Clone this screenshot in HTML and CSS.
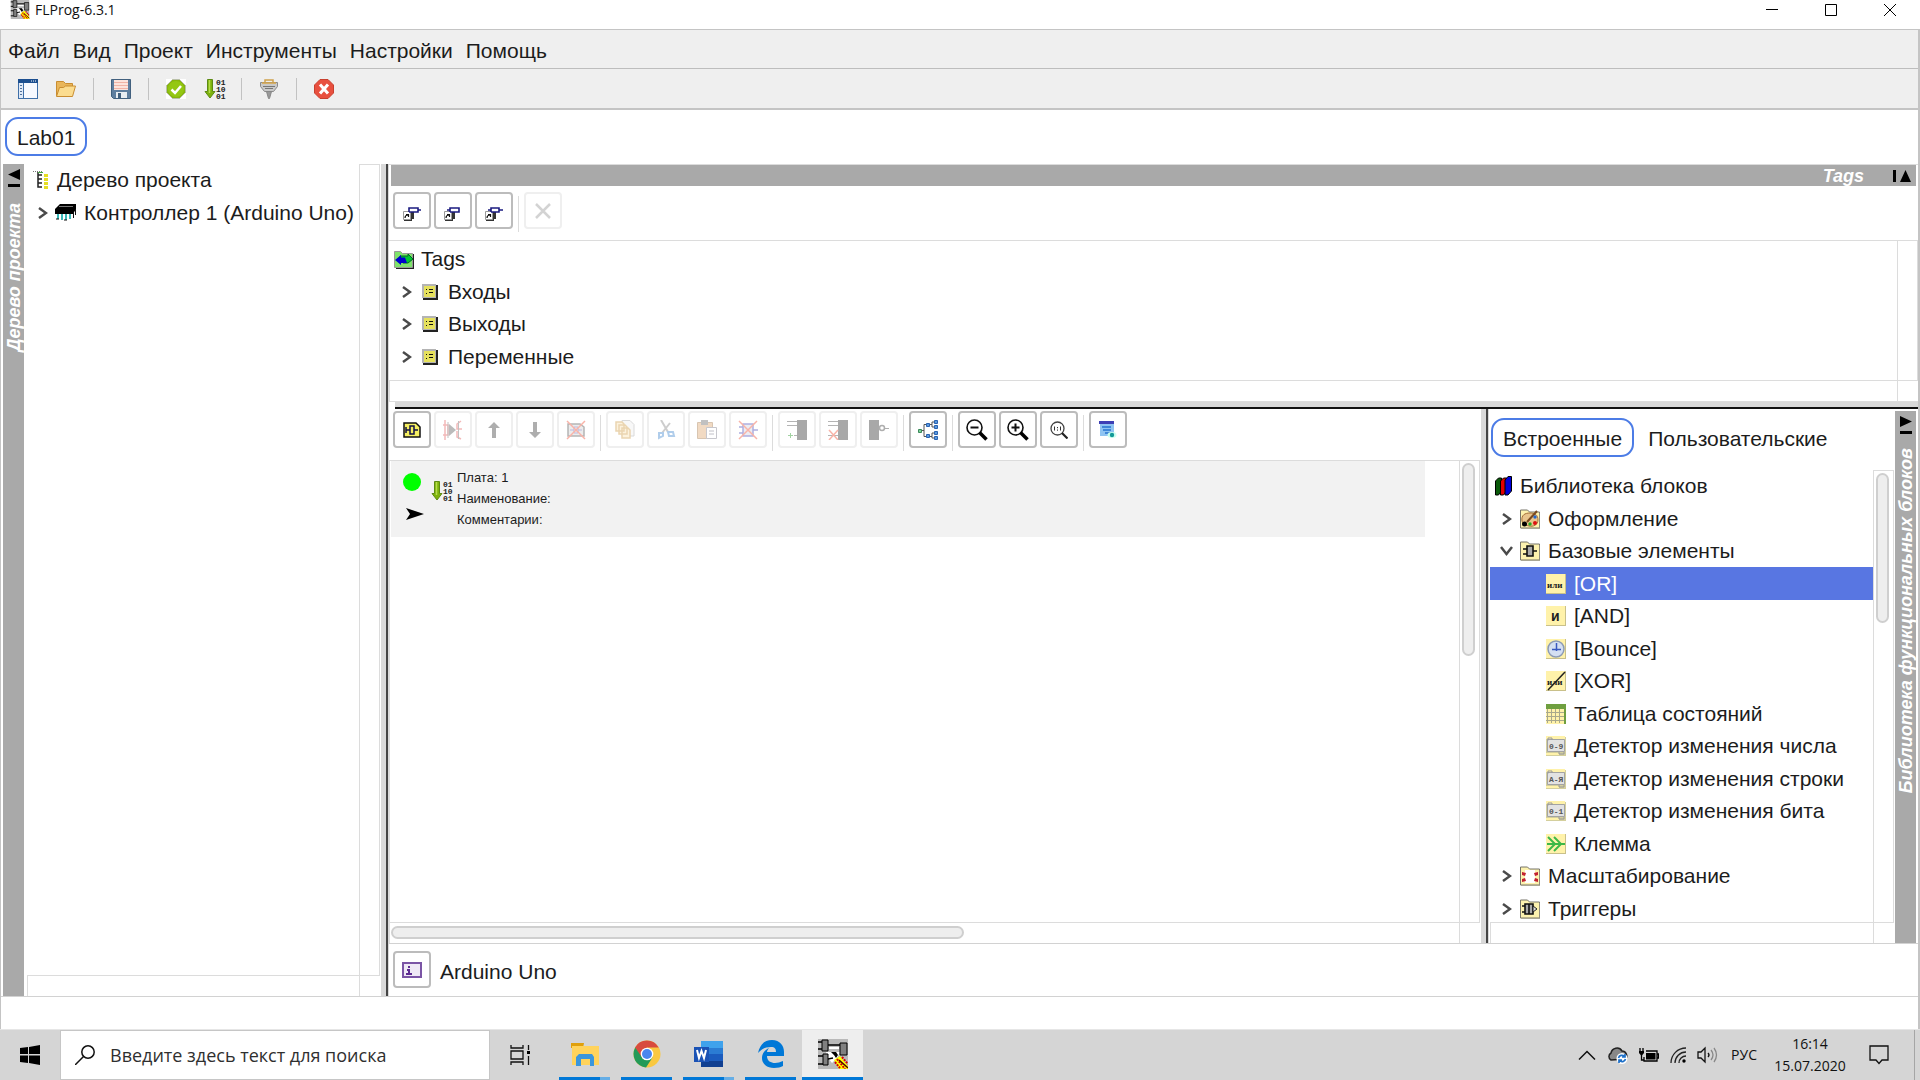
FILE: index.html
```html
<!DOCTYPE html>
<html lang="ru">
<head>
<meta charset="utf-8">
<title>FLProg-6.3.1</title>
<link rel="stylesheet" href="styles.css">
</head>
<body>
<svg class="defs" aria-hidden="true">
  <symbol id="i-app" viewBox="0 0 30 30">
    <path fill="#b9b9b9" d="M0 0h30v30H0z"/>
    <path fill="#fff" d="M11 8h10v2H11zM8 13h14l-3 6-5 5-4-5z"/>
    <path fill="#808080" stroke="#000" stroke-width="1" d="M4 1h6v11H4zM22 4h7v12h-7zM5 15h5v11H5z"/>
    <path fill="none" stroke="#000" stroke-width="1.500" d="M0 3h4M0 10h4M10 6h12M0 17h5M0 25h5M10 20l5-1"/>
    <path fill="#000" d="M13 13h5l2 3-2 3-2-3z"/>
    <path fill="#ff0" d="M16 21l6-4 8 10v3h-9z"/>
    <path fill="none" stroke="#d40000" stroke-width="2" stroke-dasharray="2 1" d="M19 20l8 10M24 18l6 7M17 23l5 6"/>
    <path fill="none" stroke="#400" stroke-width="1.400" d="M21 21l9 8"/>
  </symbol>
  <symbol id="i-down" viewBox="0 0 22 20">
    <path fill="#7db20b" stroke="#5d8a14" d="M3.500.5h5v12h2.500L6 19 1 12.500h2.500z"/>
    <path stroke="#b6dc4c" stroke-width="1.500" d="M5.500 1v13"/>
    <g font-family="Liberation Mono,monospace" font-weight="700" font-size="8" fill="#222"><text x="12" y="6">01</text><text x="12" y="13">10</text><text x="12" y="20">01</text></g>
  </symbol>
  <symbol id="i-chev" viewBox="0 0 10 14"><path fill="none" stroke="#4a4a4a" stroke-width="2.500" d="M1 2l7 5-7 5"/></symbol>
  <symbol id="i-list" viewBox="0 0 16 16">
    <path fill="#222" d="M1 1h15v15H1z"/><path fill="#b4b4b4" d="M0 0h14v14H0z"/><path fill="#e6e15c" d="M2 2h11v11H2z"/>
    <path stroke="#111" d="M4 5.500h1M4 9.500h1M7 5.500h4M7 8.500h4"/>
  </symbol>
  <symbol id="i-folder" viewBox="0 0 20 20">
    <path fill="#fdf2ae" stroke="#77756a" d="M.5 19V1h7l2 2h10v16z"/><path fill="none" stroke="#aaa794" d="M1 19.500h19V4"/>
  </symbol>
  <symbol id="i-card" viewBox="0 0 20 20"><path fill="#c9c08a" d="M0 0h20v20H0z"/><path fill="#fff2aa" d="M0 0h19v19H0z"/></symbol>
  <symbol id="i-case" viewBox="0 0 20 20">
    <path fill="#d4cf9d" d="M0 1h20v19H0z"/><path fill="#fff2aa" d="M0 0h19v3H0zM0 17h13v2H0z"/>
    <path fill="#e2e2e2" stroke="#a3a3a3" d="M1.500 3.500h17v12h-17z"/><path fill="none" stroke="#999" d="M2 4.500V2h4v2M13 16v2h5v-2"/>
  </symbol>
  <symbol id="i-page" viewBox="0 0 18 16">
    <path fill="#f5ef62" stroke="#111" stroke-width="1.500" d="M1 15V1h12l4 4v10z"/><path fill="none" stroke="#114" stroke-width="1.500" d="M3 8h4M11 8h4M7 4h4v8H7zM3 5v6"/>
  </symbol>
  <symbol id="i-tag" viewBox="0 0 18 16">
    <path fill="#333" d="M1 7h8v8H1zM8 5h3v8H8z"/><path fill="#fff" stroke="#999" d="M.5 5.500h7v8h-7z"/><path fill="none" stroke="#111" stroke-width="1.200" d="M2 12c0-2 1-3 3-3M3 8.500h2.500V11"/>
  </symbol>
  <symbol id="i-lens" viewBox="0 0 22 22">
    <circle cx="8.500" cy="8.500" r="7.500" fill="#fff" stroke="#111" stroke-width="1.600"/><path stroke="#000" stroke-width="3.500" d="M13.500 13.500l7 7"/>
  </symbol>
</svg>

<header class="titlebar">
  <svg class="title-icon" viewBox="0 0 30 30"><use href="#i-app"/></svg>
  <h1 class="title">FLProg-6.3.1</h1>
  <div class="win-buttons">
    <button class="win-btn" aria-label="Свернуть"><svg width="12" height="12"><path stroke="#000" d="M0 5.500h12"/></svg></button>
    <button class="win-btn" aria-label="Развернуть"><svg width="12" height="12"><path fill="none" stroke="#000" d="M.5.5h11v11H.5z"/></svg></button>
    <button class="win-btn" aria-label="Закрыть"><svg width="12" height="12"><path stroke="#000" d="M0 0l12 12M12 0L0 12"/></svg></button>
  </div>
</header>

<div class="window">
  <nav class="menubar">
    <button class="menu">Файл</button><button class="menu">Вид</button><button class="menu">Проект</button><button class="menu">Инструменты</button><button class="menu">Настройки</button><button class="menu">Помощь</button>
  </nav>

  <div class="toolbar">
    <button class="tool" aria-label="Новый"><svg width="20" height="20"><path fill="#3f6fa8" d="M0 0h20v20H0z"/><path fill="#1c4f90" d="M0 0h20v4H0z"/><path fill="#dfe9f7" d="M1 4h4v15H1z"/><path fill="#f7f9ff" d="M6 4h13v15H6z"/><path stroke="#4f6f9a" d="M2 6.500h2M2 9.500h2M2 12.500h2M2 15.500h2"/><path stroke="#fff" d="M13 2h1M15 2h1M17 2h1"/></svg></button>
    <button class="tool" aria-label="Открыть"><svg width="20" height="20"><path fill="#e9b65a" stroke="#c98d31" d="M.5 17V2.500h7l2 2h7V8"/><path fill="#fbdc8f" stroke="#c98d31" d="M.5 17.500l3-9h4l2-1.500h10l-3 10.500z"/></svg></button>
    <span class="tool-sep"></span>
    <button class="tool" aria-label="Сохранить"><svg width="20" height="20"><path fill="#5f7f9f" stroke="#41607e" d="M.5.5h19v19h-17l-2-2z"/><path fill="#fbe3dc" d="M3 1h14v10H3z"/><path stroke="#f0b3a6" d="M3 3.500h14M3 6.500h14M3 9.500h14"/><path fill="#e9eef2" d="M5 13h11v6H5z"/><path fill="#41607e" d="M7 14h3v5H7z"/></svg></button>
    <span class="tool-sep"></span>
    <button class="tool" aria-label="Проверить"><svg width="20" height="20"><path fill="#fff" d="M0 0h20v20H0z"/><path fill="#86b50d" stroke="#b9bfa8" d="M6.500.5h7l6 6v7l-6 6h-7l-6-6v-7z"/><circle cx="10" cy="10" r="8" fill="#94c713"/><path fill="none" stroke="#fff" stroke-width="2.500" d="M5.500 10.500l3.500 3.500 6-7"/></svg></button>
    <button class="tool" aria-label="Компилировать"><svg width="22" height="20"><use href="#i-down"/></svg></button>
    <span class="tool-sep"></span>
    <button class="tool" aria-label="Порт"><svg width="20" height="20"><path fill="none" stroke="#d0a24e" stroke-width="1.500" d="M6 4V1h8v3"/><path fill="#c9c9c9" stroke="#8b8b8b" d="M1.500 3.500h17v4l-4 5h-9l-4-5z"/><path stroke="#d9a647" stroke-width="1.500" d="M3 4h14"/><path stroke="#777" d="M4 7.500h12M6 9.500h8"/><path fill="#9a9a9a" stroke="#888" d="M7.500 12.500h5l-2 7h-1z"/></svg></button>
    <span class="tool-sep"></span>
    <button class="tool" aria-label="Закрыть проект"><svg width="20" height="20"><path fill="#e8503f" stroke="#c8402f" d="M6 .5h8L19.500 6v8L14 19.500H6L.5 14V6z"/><path stroke="#fff" stroke-width="3" d="M6 5.500l8 9M14 5.500l-8 9"/></svg></button>
  </div>

  <div class="project-tabs"><button class="tab tab-active">Lab01</button></div>

  <main class="workspace">
    <aside class="rail">
      <svg width="12" height="18"><path d="M0 5.500L12 0v11zM0 15h12v3H0z"/></svg>
      <span class="rail-text">Дерево проекта</span>
    </aside>

    <section class="pane project-pane">
      <div class="pane-body">
        <ul class="tree tree-project">
          <li class="node root"><svg width="16" height="20"><path stroke="#777" d="M0 1.500h10" stroke-dasharray="1 1"/><path fill="none" stroke="#222" stroke-width="1.500" d="M5 2v15h4M5 5h4M5 9h4M5 13h4"/><path stroke="#4a4" d="M5 2.500h5"/><path stroke="#e5de23" stroke-width="4" stroke-dasharray="3 1" d="M13 4v15"/></svg>Дерево проекта</li>
          <li class="node"><svg class="chev" width="10" height="14"><use href="#i-chev"/></svg><svg width="22" height="17"><path fill="#000" d="M5 0h16v5l-3 5H0V5z"/><path stroke="#777" d="M4 2.500h14"/><path stroke="#39b8b8" stroke-width="2" d="M3 10v5M7 10v6M11 10v6M15 10v5"/><path stroke="#111" d="M18.500 8v6M20.500 5v6M1 15h3M9 16h3"/></svg>Контроллер 1 (Arduino Uno)</li>
        </ul>
      </div>
      <div class="vtrack"></div><div class="htrack"></div><div class="corner"></div>
    </section>

    <div class="split-v"></div>

    <div class="right">
      <section class="tags">
        <header class="tags-bar"><span class="bar-text">Tags</span><svg width="18" height="12"><path d="M0 0h3v12H0zM7 12l5.500-12L18 12z"/></svg></header>
        <div class="btn-row">
          <button class="btn btn-low" aria-label="Добавить вход"><svg width="18" height="16"><use href="#i-tag"/><path fill="#fff" stroke="#1b1b80" stroke-width="1.600" d="M6 6V2h9v4H6M15 4h3"/></svg></button>
          <button class="btn btn-low" aria-label="Добавить выход"><svg width="18" height="16"><use href="#i-tag"/><path fill="#fff" stroke="#1b1b80" stroke-width="1.600" d="M6 6V2h9v4H6M3 4h3"/></svg></button>
          <button class="btn btn-low" aria-label="Добавить переменную"><svg width="18" height="16"><use href="#i-tag"/><path fill="#fff" stroke="#1b1b80" stroke-width="1.600" d="M6 6V2h8v4H6M3 4h3M14 4h4"/></svg></button>
          <span class="btn-sep"></span>
          <button class="btn" disabled aria-label="Удалить"><svg width="16" height="16"><path stroke="#888" stroke-width="2.500" d="M1 1l14 14M15 1L1 15"/></svg></button>
        </div>
        <div class="pane tags-pane">
          <div class="pane-body">
            <ul class="tree tree-tags">
              <li class="node root"><svg width="20" height="19"><path fill="#222" d="M2 4h18v15H2z"/><path fill="#7fe36b" stroke="#999" d="M.5 17.500v-16h6l2 2h10v14z"/><path fill="#00c832" stroke="#062" d="M6 6h8V4l5 5-5 4H9z"/><path fill="#00c" d="M1 10l6-5v2.500h4L13 13H7v2z"/></svg>Tags</li>
              <li class="node"><svg class="chev" width="10" height="14"><use href="#i-chev"/></svg><svg width="16" height="16"><use href="#i-list"/></svg>Входы</li>
              <li class="node"><svg class="chev" width="10" height="14"><use href="#i-chev"/></svg><svg width="16" height="16"><use href="#i-list"/></svg>Выходы</li>
              <li class="node"><svg class="chev" width="10" height="14"><use href="#i-chev"/></svg><svg width="16" height="16"><use href="#i-list"/></svg>Переменные</li>
            </ul>
          </div>
          <div class="vtrack"></div><div class="htrack"></div><div class="corner"></div>
        </div>
      </section>

      <div class="split-h"></div>

      <div class="lower">
        <section class="editor">
          <div class="btn-row">
            <button class="btn" aria-label="Добавить плату"><svg width="18" height="16"><use href="#i-page"/></svg></button>
            <button class="btn" disabled aria-label="Вставить плату"><svg width="20" height="20"><path fill="none" stroke="#e04040" stroke-width="1.500" d="M2 0v20M0 5h5v10H0M18 1l-4 3v5h5M14 11v6l4 2"/><path fill="#444" d="M6 4l7 6-7 6z"/><path fill="none" stroke="#555" d="M5 2v16M15.500 1v18"/></svg></button>
            <button class="btn" disabled aria-label="Вверх"><svg width="12" height="16"><path fill="#222" d="M6 0l6 6H8v10H4V6H0z"/></svg></button>
            <button class="btn" disabled aria-label="Вниз"><svg width="12" height="16"><path fill="#222" d="M6 16L0 10h4V0h4v10h4z"/></svg></button>
            <button class="btn" disabled aria-label="Удалить плату"><svg width="20" height="20"><path fill="#ccc" stroke="#333" stroke-width="1.500" d="M2 16V4h12l4 3v9z"/><path fill="none" stroke="#44a" d="M4 10h4V7h4v6H8v-3M12 10h4"/><path stroke="#f03010" stroke-width="1.500" d="M1 1l18 18M19 1L1 19"/></svg></button>
            <span class="btn-sep"></span>
            <button class="btn" disabled aria-label="Копировать"><svg width="20" height="20"><path fill="#eee" stroke="#999" d="M7 .5h8l4 4V16H7z"/><path fill="#f7dda4" stroke="#c78c28" stroke-width="1.500" d="M1 2h6l2 2v7H1zM4 5h6l2 2v7H4zM7 8h6l2 2v8H7z"/></svg></button>
            <button class="btn" disabled aria-label="Вырезать"><svg width="20" height="20"><path stroke="#777" stroke-width="2" d="M5 0l7 12M14 3L6 13"/><path fill="none" stroke="#2878c8" stroke-width="2" d="M3 13h4v3l-4 2zM12 12h5l1 4h-5z"/></svg></button>
            <button class="btn" disabled aria-label="Вставить"><svg width="20" height="20"><path fill="#d99a5c" stroke="#96602b" d="M.5 2.500h15v16H.5z"/><path fill="#555" d="M4 0h7v5H4z"/><path fill="#fff" stroke="#667" d="M9.500 7.500h10v11h-10z"/><path stroke="#556" d="M12 11h5M12 14h5"/></svg></button>
            <button class="btn" disabled aria-label="Удалить блок"><svg width="20" height="20"><path fill="#ccd" stroke="#22a" stroke-width="1.500" d="M5 4h10v12H5zM1 7h4M1 13h4M15 10h5"/><path stroke="#f03010" stroke-width="1.500" d="M1 1l18 18M19 1L1 19"/></svg></button>
            <span class="btn-sep"></span>
            <button class="btn" disabled aria-label="Добавить вход блока"><svg width="20" height="20"><path fill="#111" d="M10 0h10v20H10z"/><path stroke="#333" d="M0 1.500h10M0 5.500h10M7 15.500h3"/><path stroke="#080" d="M1 15.500h5M3.500 13v5"/></svg></button>
            <button class="btn" disabled aria-label="Удалить вход блока"><svg width="20" height="20"><path fill="#111" d="M10 0h10v20H10z"/><path stroke="#333" d="M0 1.500h10M0 5.500h10M0 15.500h10"/><path stroke="#f03010" stroke-width="1.500" d="M1 10l9 10M10 10L1 20"/></svg></button>
            <button class="btn" disabled aria-label="Инвертировать"><svg width="20" height="20"><path fill="#111" d="M0 0h10v20H0z"/><circle cx="13" cy="8" r="2.500" fill="#fff" stroke="#222" stroke-width="1.500"/><path stroke="#222" d="M16 8.500h4"/></svg></button>
            <span class="btn-sep"></span>
            <button class="btn" aria-label="Структура"><svg width="20" height="20"><path fill="none" stroke="#555" d="M3 10.500h3M9 4.500H6v12h3M11 4.500h3V2h2M14 4.500V7h2M11 16.500h3V13h2M14 16.500V18h2"/><path fill="#7fcf9a" stroke="#3a8a5a" d="M.5 9.500h3v3h-3z"/><path fill="#5a9be0" stroke="#2a62b0" d="M8.500 3.500h3v3h-3zM8.500 14.500h3v3h-3zM16.500.5h3v3h-3zM16.500 5.500h3v3h-3zM16.500 11.500h3v3h-3zM16.500 16.500h3v3h-3z"/></svg></button>
            <span class="btn-sep"></span>
            <button class="btn" aria-label="Уменьшить"><svg width="22" height="22"><use href="#i-lens"/><path stroke="#111" stroke-width="2" d="M4.500 8.500h8"/></svg></button>
            <button class="btn" aria-label="Увеличить"><svg width="22" height="22"><use href="#i-lens"/><path stroke="#111" stroke-width="2" d="M4.500 8.500h8M8.500 4.500v8"/></svg></button>
            <button class="btn" aria-label="Масштаб 1:1"><svg width="18" height="18"><circle cx="7.500" cy="7.500" r="6.500" fill="#fff" stroke="#444" stroke-width="1.300"/><path stroke="#222" stroke-width="2.200" d="M12 12l5.500 5.500"/><path stroke="#333" d="M4.500 5.500v4M10.500 5.500v4M7.500 6v1.200M7.500 8.500v1.200"/></svg></button>
            <span class="btn-sep"></span>
            <button class="btn" aria-label="Просмотр"><svg width="18" height="18"><path fill="#8fc4f2" d="M1 3h14v12H1z"/><path fill="#3d3fb5" d="M0 0h15v3H0z"/><path stroke="#3f87d8" stroke-width="2" d="M3 6h9M4 9h8M6 12h6"/><ellipse cx="13" cy="14" rx="4.500" ry="3" fill="#cfe"/><circle cx="13" cy="14" r="2.200" fill="#129a98"/></svg></button>
          </div>
          <div class="pane editor-pane">
            <div class="pane-body">
              <article class="board">
                <div class="board-marks">
                  <svg width="18" height="18"><circle cx="9" cy="9" r="9" fill="#0f0"/></svg>
                  <svg width="18" height="12"><path d="M0 0l18 6-18 6 4-6z"/></svg>
                </div>
                <svg class="board-icon" width="22" height="20"><use href="#i-down"/></svg>
                <div class="board-text"><p>Плата: 1</p><p>Наименование:</p><p>Комментарии:</p></div>
              </article>
            </div>
            <div class="vtrack"><div class="thumb thumb-v-editor"></div></div>
            <div class="htrack"><div class="thumb thumb-h-editor"></div></div>
            <div class="corner"></div>
          </div>
        </section>

        <div class="split-v"></div>

        <section class="library">
          <div class="lib-tabs"><button class="tab tab-active">Встроенные</button><button class="tab">Пользовательские</button></div>
          <div class="pane lib-pane">
            <div class="pane-body">
              <ul class="tree tree-lib">
                <li class="node root"><svg width="17" height="20"><path fill="#0a5a0a" stroke="#000" d="M.5 5l3-3h3v13l-3 4h-3z"/><path fill="#e00000" stroke="#000" d="M5.500 5l3-3h3v13l-3 4h-3z"/><path fill="#0000d8" stroke="#000" d="M10 4l3-3.500h3.500V15L13 19h-3z"/></svg>Библиотека блоков</li>
                <li class="node"><svg class="chev" width="10" height="14"><use href="#i-chev"/></svg><svg width="20" height="20"><use href="#i-folder"/><path fill="#e8c48c" stroke="#a5713a" d="M2 12C1 6 5 4 10 4s8 2 8 7-5 7-9 6-6-1-7-5z"/><path stroke="#7a4a20" stroke-width="2" d="M17 2L7 13"/><circle cx="4.500" cy="15" r="2.500"/><circle cx="15" cy="8" r="1.700" fill="#26c"/><circle cx="10" cy="15" r="1.700" fill="#2a2"/><circle cx="15" cy="14" r="2" fill="#d11"/></svg>Оформление</li>
                <li class="node"><svg class="chev" width="10" height="12"><path fill="none" stroke="#4a4a4a" stroke-width="2.500" d="M-1 2l5.500 7L10 2"/></svg><svg width="20" height="20"><use href="#i-folder"/><path fill="#aaa" stroke="#111" stroke-width="1.600" d="M7 5h6v10H7zM3 8h4M3 13h4M13 10h4"/></svg>Базовые элементы</li>
                <li class="node leaf selected"><svg width="20" height="20"><use href="#i-card"/><text x="1" y="14" font-family="Liberation Serif,serif" font-weight="700" font-size="9" fill="#222">или</text></svg>[OR]</li>
                <li class="node leaf"><svg width="20" height="20"><use href="#i-card"/><text x="5" y="15" font-family="Liberation Sans,sans-serif" font-weight="700" font-size="14" fill="#222">и</text></svg>[AND]</li>
                <li class="node leaf"><svg width="20" height="20"><use href="#i-card"/><circle cx="10" cy="10" r="8" fill="#d4dff2" stroke="#8b9ab5" stroke-width="1.500"/><path fill="none" stroke="#3858c0" stroke-width="1.500" d="M10.500 4v8M6 10.500h9"/></svg>[Bounce]</li>
                <li class="node leaf"><svg width="20" height="20"><use href="#i-card"/><text x="1" y="14" font-family="Liberation Serif,serif" font-weight="700" font-size="9" fill="#222">или</text><path stroke="#222" stroke-width="1.500" d="M2 19L19 1"/></svg>[XOR]</li>
                <li class="node leaf"><svg width="20" height="20"><path fill="#fff2aa" d="M0 0h20v20H0z"/><path fill="#6f9f40" d="M0 0h20v20h-2V5H0z"/><path stroke="#a9a98c" d="M1.500 5v14M5.500 5v14M9.500 5v14M13.500 5v14M0 8.500h18M0 12.500h18M0 16.500h18"/></svg>Таблица состояний</li>
                <li class="node leaf"><svg width="20" height="20"><use href="#i-case"/><text x="3" y="13" font-family="Liberation Mono,monospace" font-weight="700" font-size="8" fill="#555">0-9</text></svg>Детектор изменения числа</li>
                <li class="node leaf"><svg width="20" height="20"><use href="#i-case"/><text x="3" y="13" font-family="Liberation Mono,monospace" font-weight="700" font-size="8" fill="#555">А-Я</text></svg>Детектор изменения строки</li>
                <li class="node leaf"><svg width="20" height="20"><use href="#i-case"/><text x="3" y="13" font-family="Liberation Mono,monospace" font-weight="700" font-size="8" fill="#555">0-1</text></svg>Детектор изменения бита</li>
                <li class="node leaf"><svg width="20" height="20"><use href="#i-card"/><path fill="none" stroke="#3db848" stroke-width="2" d="M2 3l7 7-7 7M8 3l7 7-7 7M1 10h18"/></svg>Клемма</li>
                <li class="node"><svg class="chev" width="10" height="14"><use href="#i-chev"/></svg><svg width="20" height="20"><use href="#i-folder"/><path fill="#fff" d="M5 4h10v13H5z"/><path fill="#c22030" d="M2 6l4 1-1 3-3-1zM2 16l4-1-1-3-3 1zM18 6l-4 1 1 3 3-1zM18 16l-4-1 1-3 3 1z"/></svg>Масштабирование</li>
                <li class="node"><svg class="chev" width="10" height="14"><use href="#i-chev"/></svg><svg width="20" height="20"><use href="#i-folder"/><path fill="#aaa" stroke="#111" stroke-width="1.600" d="M5 5h8v10H5zM2 7h3M2 13h3M9 5v10"/><path fill="#ddd" stroke="#222" d="M13 7l4 3-4 3z"/></svg>Триггеры</li>
              </ul>
            </div>
            <div class="vtrack"><div class="thumb thumb-v-lib"></div></div><div class="htrack"></div><div class="corner"></div>
          </div>
        </section>

        <aside class="rail rail-right">
          <svg width="12" height="18"><path d="M12 5.500L0 0v11zM0 15h12v3H0z"/></svg>
          <span class="rail-text">Библиотека функциональных блоков</span>
        </aside>
      </div>

      <footer class="board-footer">
        <button class="btn" aria-label="Информация"><svg width="20" height="16"><path fill="#efe9f5" stroke="#7b55a5" stroke-width="2" d="M1 1h18v14H1z"/><path fill="#5d2c91" d="M6 4h2v2H6zM5 7h3v4h2v2H4v-2h2V9H5z"/></svg></button>
        <span>Arduino Uno</span>
      </footer>
    </div>
  </main>
</div>

<footer class="taskbar">
  <button class="start" aria-label="Пуск"><svg width="20" height="20"><path d="M0 3l8-1v7H0zM9 2l11-2v9H9zM0 10.500h8v7.500l-8-1zM9 10.500h11V20L9 18z"/></svg></button>
  <label class="search"><svg width="20" height="20"><circle cx="13" cy="7" r="6.200" fill="none" stroke="#111" stroke-width="1.500"/><path stroke="#111" stroke-width="1.500" d="M8.500 11.500L0 20"/></svg><input class="search-input" type="text" placeholder="Введите здесь текст для поиска" aria-label="Поиск"></label>
  <button class="taskview" aria-label="Представление задач"><svg width="20" height="20"><path fill="none" stroke="#111" stroke-width="1.300" d="M1 0v3h12V0M1 6h12v8H1zM1 20v-3h12v3M18.500 0v5M18.500 11v9"/><path d="M17 6h3v3h-3z"/></svg></button>
  <div class="apps">
    <button class="app app-multi" aria-label="Проводник"><svg width="28" height="24"><path fill="#e0a00c" d="M0 1h13l-1 5H0z"/><path fill="#ffd35c" d="M1 4h27v19H1z"/><path fill="#3b96dc" d="M5 24V15l3-3h13l2 3v9h-4v-7H10v7z"/></svg></button>
    <button class="app" aria-label="Chrome"><svg width="28" height="28"><circle cx="14" cy="14" r="13.500" fill="#f9c840"/><path fill="#d84b3e" d="M2 7.500A13.500 13.500 0 0 1 25.700 7.500H14L8 18z"/><path fill="#239a58" d="M2.200 7.500A13.500 13.500 0 0 0 13 27.500L19.500 17.500 9 17.500z"/><circle cx="14" cy="14" r="6.300" fill="#fff"/><circle cx="14" cy="14" r="5" fill="#4a86ee"/></svg></button>
    <button class="app app-multi" aria-label="Word"><svg width="30" height="28"><path fill="#3fa2ec" d="M7 1h22v7H7z"/><path fill="#2b7cd3" d="M7 8h22v6H7z"/><path fill="#1b5cbe" d="M7 14h22v7H7z"/><path fill="#103f91" d="M7 21h22v6H7z"/><path fill="#1a52b5" d="M0 7h15v15H0z"/><path fill="none" stroke="#fff" stroke-width="2" d="M3 10l2 8 2.500-7 2.500 7 2-8"/></svg></button>
    <button class="app" aria-label="Edge"><svg width="26" height="28"><path fill="#0078d7" d="M0 13C2 4 7 0 14 0c8 0 12 6 12 12v4H9c0 5 4 7 8 7 3 0 5-1 8-2v5c-2 1-5 2-9 2C9 28 4 24 4 18c0-5 3-8 7-10-1 1-2 3-2 4h9c0-3-1-5-5-5C8 7 3 9 0 13z"/></svg></button>
    <button class="app app-current" aria-label="FLProg"><svg width="30" height="30"><use href="#i-app"/></svg></button>
  </div>
  <div class="tray">
    <svg width="18" height="10"><path fill="none" stroke="#111" stroke-width="1.500" d="M1 9.500l8-8 8 8"/></svg>
    <svg width="21" height="18"><path fill="#888" stroke="#222" stroke-width="1.500" d="M4 14a4 4 0 0 1 0-7c1-5 8-7 11-2 4 0 6 5 4 8z"/><circle cx="15" cy="12.500" r="5.500" fill="#fff"/><path fill="none" stroke="#1e70c8" stroke-width="1.700" d="M11.500 12a3.500 3.500 0 0 1 6-1.500M18.500 13a3.500 3.500 0 0 1-6 1.500M18 8v3h-3M12 17v-3h3"/></svg>
    <svg width="20" height="14"><path fill="none" stroke="#000" stroke-width="1.300" d="M7 3h11v10H5V9M18 6h1.500v4H18M1 0v3M4 0v3M2.500 7v5H5"/><path d="M0 3h5v2L2.500 8 0 5zM7 5h9.500v6.500H7z"/></svg>
    <svg width="16" height="16"><path fill="none" stroke="#222" stroke-width="1.300" d="M1 16A15 15 0 0 1 16 1M5 16A11 11 0 0 1 16 5M9 16a7 7 0 0 1 7-7"/><circle cx="14" cy="14" r="1.700"/></svg>
    <svg width="21" height="18"><path fill="none" stroke="#111" stroke-width="1.300" d="M1 6h3l4-4v14l-4-4H1z"/><path fill="none" stroke="#111" stroke-width="1.300" d="M11 7q2 2 0 4"/><path fill="none" stroke="#888" stroke-width="1.300" d="M14 4q4 5 0 10M17 2q5 7 0 14"/></svg>
    <span class="lang">РУС</span>
    <time class="clock"><span>16:14</span><span>15.07.2020</span></time>
    <svg width="20" height="20"><path fill="none" stroke="#111" stroke-width="1.300" d="M1 1h18v14h-6l-3 3.500L7 15H1z"/></svg>
  </div>
  <div class="show-desktop"></div>
</footer>
</body>
</html>
```
FILE: styles.css
```css
* { box-sizing: border-box; }

body {
  margin: 0;
  height: 100vh;
  display: flex;
  flex-direction: column;
  background: #fff;
  color: #1c1c1c;
  font: 21px/32px "Liberation Sans", Arial, sans-serif;
}

button {
  margin: 0;
  padding: 0;
  border: 0;
  background: none;
  color: inherit;
  font: inherit;
}

svg { display: block; flex: none; }
.defs { display: none; }
ul, p, h1 { margin: 0; padding: 0; list-style: none; }

/* Title bar */
.titlebar { display: flex; flex: none; height: 29px; padding-left: 10px; align-items: flex-start; }
.title-icon { width: 20px; height: 19px; }
.title { flex: 1; margin-left: 5px; font: 14px/20px "Open Sans", sans-serif; color: #111; }
.win-buttons { display: flex; padding-right: 1px; }
.win-btn { width: 59px; height: 20px; display: flex; justify-content: center; align-items: center; }

/* Window frame */
.window {
  flex: 1;
  min-height: 0;
  display: flex;
  flex-direction: column;
  border: solid #c4c4c4;
  border-width: 1px 2px 0 1px;
  padding-bottom: 32px;
}

.menubar { display: flex; flex: none; gap: 13px; height: 39px; padding: 5px 7px 0; background: #efefef; border-bottom: 1px solid #bdbdbd; }
.menu { height: 32px; }

.toolbar { display: flex; flex: none; align-items: center; height: 41px; padding-left: 17px; gap: 18px; background: #efefef; border-bottom: 2px solid #c4c4c4; }
.tool-sep { width: 1px; height: 22px; margin: 0 -1px; background: #c2c2c2; }
.tool { width: 20px; height: 20px; }

/* Rounded tabs */
.project-tabs { flex: none; height: 54px; padding: 7px 4px; }
.tab { height: 39px; padding: 2px 10px 0; border: 2px solid transparent; border-radius: 13px; }
.tab-active { border-color: #4c7ce6; }

/* Workspace */
.workspace { flex: 1; min-height: 0; display: flex; padding-left: 2px; border-bottom: 1px solid #d2d2d2; }

.rail { width: 21px; padding-top: 5px; display: flex; flex-direction: column; align-items: center; gap: 16px; background: #a9a9a9; }
.rail-text, .bar-text { color: #fff; font: italic bold 18px/20px "Liberation Sans", Arial, sans-serif; }
.rail-text { writing-mode: vertical-rl; transform: rotate(180deg); white-space: nowrap; }

.split-v { width: 8px; border: solid #d9d9d9; border-width: 0 1px 0 5px; background: #444; }
.split-h { height: 7px; margin-left: 6px; border-top: 5px solid #d9d9d9; background: #111; }

.pane { display: grid; grid-template-columns: minmax(0, 1fr) 21px; grid-template-rows: minmax(0, 1fr) 21px; min-height: 0; }
.pane-body { overflow: hidden; }
.vtrack { border: solid #dcdcdc; border-width: 1px 1px 0; padding: 2px; }
.htrack { border: solid #dcdcdc; border-width: 1px 0 0 1px; padding: 3px 1px; }
.corner { border: solid #dcdcdc; border-width: 1px 0 0 1px; }
.thumb { background: #eee; border: 2px solid #cfcfcf; border-radius: 7px; }
.thumb-v-editor { width: 13px; height: 193px; }
.thumb-h-editor { width: 573px; height: 13px; }
.thumb-v-lib { width: 13px; height: 150px; }

.project-pane { width: 356px; margin-right: 1px; }
.project-pane .htrack { margin-left: 3px; }

/* Trees */
.node { display: flex; align-items: center; height: 32px; padding-left: 12px; gap: 8px; white-space: nowrap; }
.node:nth-child(even) { height: 33px; }
.node.root { padding-left: 5px; }
.node.leaf { padding-left: 56px; }
.node.selected { background: #5876e2; color: #fff; }
.chev { overflow: visible; }
.tree-project .node { padding-left: 14px; gap: 7px; }
.tree-project .root { padding-left: 9px; gap: 8px; }
.tree-tags { padding-top: 2px; }
.tree-tags .node { padding-left: 13px; gap: 10px; }
.tree-tags .root { padding-left: 5px; gap: 7px; }

/* Right column */
.right { flex: 1; min-width: 0; display: flex; flex-direction: column; border-top: 1px solid #dcdcdc; }
.tags-bar { display: flex; justify-content: flex-end; align-items: center; gap: 29px; height: 21px; margin: 0 2px; padding-right: 5px; background: #a9a9a9; }
.btn-row { display: flex; gap: 3px; padding: 6px 4px 11px; }
.editor .btn-row { padding: 2px 4px 12px; }
.btn { width: 38px; height: 37px; display: flex; justify-content: center; align-items: center; border: 2px solid #bcbcbc; border-radius: 4px; background: #fff; }
.btn-low { padding-top: 6px; }
.btn:disabled { border-color: #efefef; }
.btn:disabled svg { opacity: .36; }
.btn-sep { width: 1px; height: 36px; margin: 4px 2px -4px; background: #dcdcdc; }
.tags-pane { height: 162px; border: solid #dcdcdc; border-width: 1px 0; }
.tags-pane .vtrack { border-top: 0; }

.lower { flex: 1; min-height: 0; display: flex; padding-right: 2px; }
.editor { flex: 1; min-width: 0; display: flex; flex-direction: column; }
.editor-pane { flex: 1; margin-right: 1px; }
.editor-pane .pane-body { border: solid #dcdcdc; border-width: 1px 0 0 1px; }

.board { display: flex; height: 76px; margin: 0 34px 0 1px; padding-left: 12px; background: #f2f2f2; }
.board-marks { width: 28px; padding-top: 12px; display: flex; flex-direction: column; gap: 17px; }
.board-marks svg + svg { margin-left: 3px; }
.board-icon { margin: 20px 4px 0 0; }
.board-text { padding-top: 6px; font-size: 13px; line-height: 21px; }

.library { width: 406px; display: flex; flex-direction: column; }
.lib-tabs { display: flex; flex: none; gap: 2px; height: 61px; padding: 9px 2px 0; }
.lib-pane { flex: 1; margin: 0 1px; }
.rail-right { margin-top: 2px; gap: 14px; }

.board-footer { display: flex; flex: none; gap: 9px; height: 53px; padding: 7px 4px; border-top: 1px solid #d2d2d2; }
.board-footer span { padding-top: 5px; }

/* Taskbar */
.taskbar { display: flex; flex: none; height: 51px; background: #d5d5d5; border-top: 1px solid #e6e6e6; color: #111; font-family: "Open Sans", sans-serif; }
.start { width: 60px; display: flex; justify-content: center; align-items: center; }
.search { width: 430px; display: flex; align-items: center; gap: 15px; padding-left: 14px; background: #fff; border: 1px solid #c6c6c6; }
.search-input { flex: 1; border: 0; padding: 0; background: none; font: 18px/28px "Open Sans", sans-serif; }
.search-input::placeholder { color: #2f2f2f; opacity: 1; }
.taskview { width: 60px; display: flex; justify-content: center; align-items: center; }
.apps { display: flex; gap: 11px; padding-left: 9px; }
.app { width: 51px; display: flex; justify-content: center; align-items: center; border-bottom: 3px solid #0078d7; }
.app-multi { border-image: linear-gradient(90deg, #0078d7 80%, #66aee6 80%) 0 0 3; }
.app-current { width: 61px; margin-left: -5px; background: #eee; }
.tray { margin-left: auto; display: flex; align-items: center; gap: 11px; padding-right: 25px; font-size: 14px; }
.lang { margin-left: 2px; }
.clock { display: flex; flex-direction: column; align-items: center; width: 84px; margin-right: 6px; line-height: 22px; }
.show-desktop { width: 6px; border-left: 1px solid #a5a5a5; }
```
